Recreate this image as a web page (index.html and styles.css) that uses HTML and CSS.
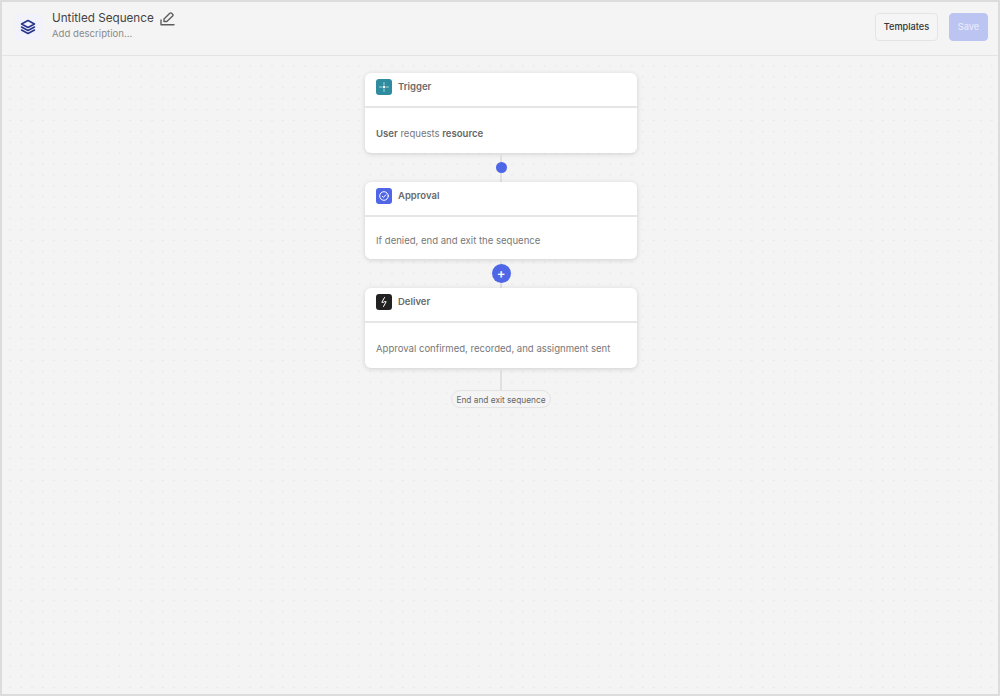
FILE: index.html
```html
<!DOCTYPE html>
<html lang="en">
<head>
<meta charset="utf-8">
<title>Untitled Sequence</title>
<link rel="stylesheet" href="styles.css">
</head>
<body>
<div class="frame">
  <header class="topbar">
    <div class="logo">
      <svg width="16" height="16" viewBox="0 0 16 16" fill="none" stroke="#27348b" stroke-width="1.5" stroke-linejoin="round" stroke-linecap="round">
        <path d="M8 1.5 14.5 5 8 8.500 1.500 5Z"/>
        <path d="M1.500 8 8 11.500 14.500 8"/>
        <path d="M1.500 11 8 14.500 14.500 11"/>
      </svg>
    </div>
    <div class="titles">
      <div class="title-row">
        <span class="title">Untitled Sequence</span>
        <svg class="edit" width="15" height="14" viewBox="0 0 15 14" fill="none" stroke="#5c5c5c" stroke-width="1.400" stroke-linejoin="round" stroke-linecap="round">
          <path d="M4 9.500V7L9.800 1.300a1.300 1.300 0 0 1 1.800 0l1 1a1.300 1.300 0 0 1 0 1.800L6.800 9.500Z"/>
          <path d="M1 8V12.700H14"/>
        </svg>
      </div>
      <div class="desc">Add description...</div>
    </div>
    <div class="actions">
      <button class="btn">Templates</button>
      <button class="btn primary">Save</button>
    </div>
  </header>
  <main class="canvas">
    <section class="card">
      <div class="card-head">
        <span class="badge teal">
          <svg width="12" height="12" viewBox="0 0 12 12" fill="none" stroke="#a9d6df" stroke-width="1" stroke-linecap="round">
            <path d="M6 1.500V3.800M6 8.200V10.500M1.500 6H3.800M8.200 6H10.500"/>
            <circle cx="6" cy="6" r="1.300" fill="#fff" stroke="none"/>
          </svg>
        </span>
        <span class="card-title">Trigger</span>
      </div>
      <div class="card-body tall"><b>User</b> requests <b>resource</b></div>
    </section>
    <div class="link dot-link"><span class="dot"></span></div>
    <section class="card">
      <div class="card-head">
        <span class="badge blue">
          <svg width="12" height="12" viewBox="0 0 12 12" fill="none" stroke="#fff" stroke-width="1" stroke-linecap="round" stroke-linejoin="round">
            <circle cx="6" cy="6" r="4.300"/>
            <path d="M4.200 6.200 5.500 7.400 7.800 4.800"/>
          </svg>
        </span>
        <span class="card-title">Approval</span>
      </div>
      <div class="card-body">If denied, end and exit the sequence</div>
    </section>
    <div class="link plus-link"><span class="plus">+</span></div>
    <section class="card">
      <div class="card-head">
        <span class="badge dark">
          <svg width="12" height="12" viewBox="0 0 12 12" fill="none" stroke="#fff" stroke-width="1" stroke-linecap="round" stroke-linejoin="round">
            <path d="M6.500 1.500 3.800 6.300H5.500M5.500 10.500 8.200 5.700H6.500"/>
          </svg>
        </span>
        <span class="card-title">Deliver</span>
      </div>
      <div class="card-body tall">Approval confirmed, recorded, and assignment sent</div>
    </section>
    <div class="tail"></div>
    <div class="end-pill">End and exit sequence</div>
  </main>
</div>
</body>
</html>
```
FILE: styles.css
```css
* { box-sizing: border-box; }
html, body { margin: 0; height: 100%; }
body { font-family: Inter, "Liberation Sans", sans-serif; background: #f4f4f4; color: #666; }
.frame { width: 1000px; height: 696px; border: 2px solid #dcdcdc; display: flex; flex-direction: column; background: #f4f4f4; overflow: hidden; }
.topbar { height: 54px; flex: none; display: flex; align-items: center; padding: 0 10px 4px 13px; border-bottom: 1px solid #e4e4e4; }
.logo { width: 26px; height: 26px; background: #f1f2fb; border-radius: 4px; display: flex; align-items: center; justify-content: center; margin-right: 11px; }
.titles { display: flex; flex-direction: column; gap: 0; margin-top: -3px; }
.title-row { display: flex; align-items: center; gap: 6px; height: 17px; margin-top: 1px; }
.title { font-size: 11.700px; line-height: 17px; color: #444; }
.desc { font-size: 9.600px; line-height: 14px; color: #8a8a8a; }
.actions { margin-left: auto; display: flex; gap: 11px; }
.btn { font-family: inherit; font-size: 9.200px; height: 28px; border-radius: 4px; border: 1px solid #e4e4e4; background: #f5f5f5; color: #333; padding: 0; width: 63px; font-weight: 500; }
.btn.primary { background: #bcc5f2; border-color: #bcc5f2; color: #e5e9fb; width: 39px; }
.canvas { flex: 1; display: flex; flex-direction: column; align-items: center; padding: 17px 0 0 2px; background-color: #f4f4f4; background-image: radial-gradient(circle, #e3e3e3 0.600px, transparent 1.100px); background-size: 10.920px 10.920px; background-position: 2.800px 4.500px; }
.card { width: 272px; flex: none; background: #fff; border-radius: 6px; box-shadow: 0 1px 5px rgba(0,0,0,.15); }
.card-head { height: 35px; border-bottom: 2px solid #e6e6e6; display: flex; align-items: flex-start; padding: 6px 11px 0; gap: 6px; }
.badge { width: 16px; height: 16px; border-radius: 3px; display: flex; align-items: center; justify-content: center; flex: none; }
.teal { background: #2f8b9e; }
.blue { background: #4f66e6; }
.dark { background: #222; }
.card-title { font-size: 9.500px; line-height: 16px; font-weight: 600; color: #6a6a6a; }
.card-body { height: 42px; padding: 16px 11px 0; font-size: 9.550px; line-height: 16px; color: #777; }
.card-body.tall { height: 45px; padding-top: 18px; }
.card-body b { font-weight: 600; color: #666; }
.link { width: 2px; height: 29px; flex: none; background: #e0e0e0; display: flex; align-items: center; justify-content: center; }
.dot { width: 11px; height: 11px; border-radius: 50%; background: #4f66e6; flex: none; }
.plus { width: 19px; height: 19px; border-radius: 50%; background: #4f66e6; color: #fff; font-size: 13px; line-height: 18px; text-align: center; flex: none; font-weight: 600; }
.tail { width: 2px; height: 22px; background: #e0e0e0; flex: none; }
.end-pill { width: 100px; text-align: center; height: 18px; border: 1px solid #e4e4e4; border-radius: 9px; font-size: 8.300px; line-height: 18px; color: #666; background: #f4f4f4; }
```
